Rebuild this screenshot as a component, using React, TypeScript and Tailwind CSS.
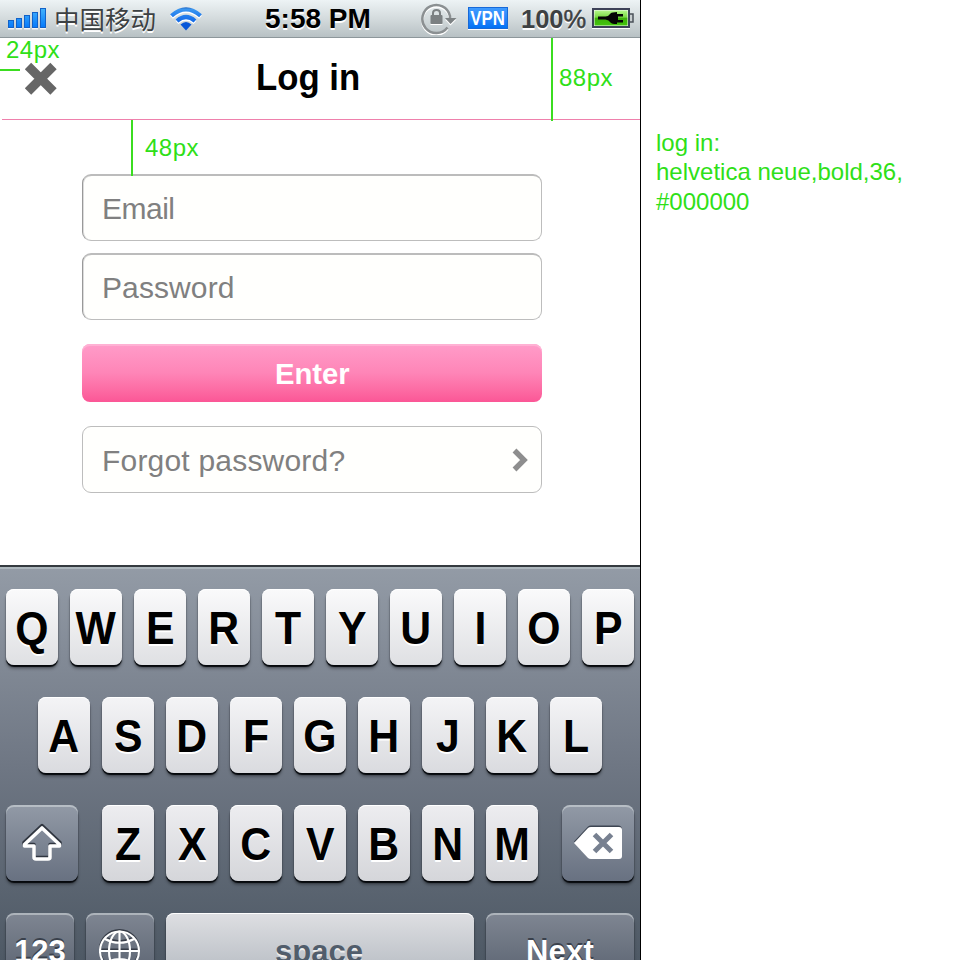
import React from "react";

const KEY =
  "flex h-[76px] items-center justify-center rounded-[8px] shadow-[0_2px_1px_#05080c,0_4px_3px_rgba(0,0,0,0.3),inset_0_1px_0_#fff]";
const DARK =
  "flex h-[76px] items-center justify-center rounded-[8px] shadow-[0_2px_1px_#05080c,0_4px_3px_rgba(0,0,0,0.3),inset_0_2px_0_rgba(220,225,228,0.5)]";

function LetterKey({ letter, tone }: { letter: string; tone: string }) {
  return (
    <div className={`${KEY} w-[52px] bg-linear-to-b ${tone}`}>
      <span className="block scale-x-[0.93] pt-[2px] text-[46px] leading-[74px] font-bold [text-shadow:0_2px_0_#fff]">{letter}</span>
    </div>
  );
}

function SignalBars() {
  const bars = [
    [0, 12, 8],
    [8, 10, 10],
    [16, 7, 13],
    [24, 4, 16],
    [32, 0, 20],
  ];
  return (
    <svg width="38" height="22" viewBox="0 0 38 22">
      <defs>
        <linearGradient id="sig" x1="0" y1="0" x2="0" y2="20" gradientUnits="userSpaceOnUse">
          <stop offset="0" stopColor="#45b4fb" />
          <stop offset="1" stopColor="#0478fb" />
        </linearGradient>
      </defs>
      {bars.map(([x, y, h]) => (
        <g key={x}>
          <rect x={x} y={y + 1.5} width="6" height={h} fill="#fff" opacity=".8" />
          <rect x={x} y={y} width="6" height={h} fill="#1262c8" />
          <rect x={x + 1} y={y + 1} width="4" height={h - 2} fill="url(#sig)" />
        </g>
      ))}
    </svg>
  );
}

function Wifi() {
  return (
    <svg width="34" height="26" viewBox="0 0 34 26">
      <defs>
        <linearGradient id="wifi" x1="0" y1="0" x2="0" y2="24" gradientUnits="userSpaceOnUse">
          <stop offset="0" stopColor="#184ea8" />
          <stop offset=".14" stopColor="#3a96f0" />
          <stop offset=".5" stopColor="#1d76ec" />
          <stop offset="1" stopColor="#0757d8" />
        </linearGradient>
      </defs>
      <g transform="translate(0 1.5)" fill="none" stroke="#fff" strokeWidth="4.2">
        <path d="M2.5 9.800Q17-3 31.500 9.800" />
        <path d="M8 15Q17 7 26 15" />
      </g>
      <g fill="none" stroke="url(#wifi)" strokeWidth="4.200">
        <path d="M2.500 9.800Q17-3 31.500 9.800" />
        <path d="M8 15Q17 7 26 15" />
      </g>
      <path d="M11.500 18.500Q17 13.500 22.500 18.500L17 24.500Z" fill="#0757d8" />
    </svg>
  );
}

function RotationLock() {
  return (
    <svg width="36" height="33" viewBox="0 0 36 33" fill="none">
      <path d="M26.500 25.500A14 14 0 1 1 29 14" stroke="#fff" strokeWidth="2.500" transform="translate(0 1.500)" />
      <path d="M26.500 25.500A14 14 0 1 1 29 14V17" stroke="#8b9092" strokeWidth="2.500" />
      <path d="M24 17.500H35.500L29.500 23.500Z" fill="#fff" />
      <path d="M24 16H35.500L29.500 22Z" fill="#7d8284" />
      <rect x="9.500" y="13" width="12" height="9" rx="1" fill="#7b8082" />
      <path d="M12 13V11Q12 8 15.500 8Q19 8 19 11V13" stroke="#7b8082" strokeWidth="2" />
      <path d="M9.500 22.500H21.500" stroke="#fff" />
    </svg>
  );
}

function Battery() {
  return (
    <svg width="42" height="22" viewBox="0 0 42 22">
      <defs>
        <linearGradient id="bat" x1="0" y1="0" x2="0" y2="1">
          <stop offset="0" stopColor="#b4f88a" />
          <stop offset=".45" stopColor="#79d943" />
          <stop offset=".5" stopColor="#3dae0b" />
          <stop offset="1" stopColor="#43c50c" />
        </linearGradient>
      </defs>
      <path d="M0 20.500H38" stroke="#fff" />
      <rect x="1" y="1" width="36" height="18" fill="#f3f7f6" stroke="#3d4258" strokeWidth="2" />
      <rect x="2.500" y="2.500" width="33" height="15" fill="url(#bat)" />
      <path d="M38 6H41V14H38" fill="#c8ced0" stroke="#4b515a" strokeWidth="1.500" />
      <path d="M6 8.500H13.500Q17 8 18.500 5.500Q20 4 25 4V6H31V8.500H26V12H31V14.500H25V16Q20 16 18.500 14.500Q17 12 13.500 11.500H6Z" fill="#050505" />
    </svg>
  );
}

function Globe() {
  return (
    <svg width="42" height="46" viewBox="0 0 42 46" fill="none">
      <g stroke="#363c47" strokeWidth="2.200" transform="translate(0 -1.500)">
        <circle cx="20.500" cy="23" r="19.500" />
        <path d="M1.500 23H40M6 11Q20.500 18.500 35 11" />
      </g>
      <g stroke="#fff" strokeWidth="2.100">
        <circle cx="20.500" cy="23" r="19.500" />
        <ellipse cx="20.500" cy="23" rx="10.500" ry="19.500" />
        <path d="M20.500 3.500V42.500M1 23H40M6 11Q20.500 18.500 35 11M6 35Q20.500 27 35 35" />
      </g>
    </svg>
  );
}

function StatusBar() {
  return (
    <div className="flex h-[38px] w-[640px] border-b border-[#8d979b] bg-linear-to-b from-[#edf3f5] via-[#d4dbdd] to-[#b8c1c4]">
      <div className="ml-[8px] mt-[8px] w-[38px]"><SignalBars /></div>
      <div className="ml-[8px] w-[108px] whitespace-nowrap text-[25.500px] leading-[36px] text-[#3d4143] [font-family:'Noto_Sans_CJK_SC',sans-serif] [text-shadow:0_2px_0_#fff]">中国移动</div>
      <div className="ml-[7px] mt-[6px] w-[34px]"><Wifi /></div>
      <div className="ml-[62px] w-[120px] whitespace-nowrap text-[28px] leading-[38px] font-bold [text-shadow:0_2px_0_#fff]">5:58 PM</div>
      <div className="ml-[36px] mt-[2px] w-[36px]"><RotationLock /></div>
      <div className="ml-[11px] mt-[7px] flex h-[22px] w-[40px] items-center justify-center border border-[#1769d8] bg-linear-to-b from-[#3f9bff] to-[#0072f5] text-[20px] leading-none font-bold text-white shadow-[0_1px_0_#fff]">
        <span className="scale-x-[0.84]">VPN</span>
      </div>
      <div className="ml-[13px] w-[66px] whitespace-nowrap text-[25.500px] leading-[38px] font-bold text-[#3d4143] [text-shadow:0_2px_0_#fff]">
        100<span className="font-normal [-webkit-text-stroke:0.5px_#3d4143]">%</span>
      </div>
      <div className="ml-[5px] mt-[8px] w-[42px]"><Battery /></div>
    </div>
  );
}

function Header() {
  return (
    <div className="relative h-[82px] w-[640px]">
      <svg className="absolute left-[24px] top-[24px]" width="34" height="34" viewBox="0 0 34 34">
        <path d="M4 4L29.500 29.500M29.500 4L4 29.500" stroke="#666" strokeWidth="9" />
      </svg>
      <div className="pl-[256px] pt-[16px] text-[36px] leading-[48px] font-bold text-black">
        <span className="inline-block origin-left scale-x-[0.965]">Log in</span>
      </div>
      <div className="absolute bottom-0 left-[2px] h-px w-[638px] bg-[#ef80ac]" />
      <div className="absolute left-0 top-[31px] h-[2px] w-[20px] bg-[#3bdd20]" />
      <div className="absolute left-[6px] top-[-2px] text-[24px] leading-[28px] tracking-[0.5px] text-[#2fdf18]">24px</div>
      <div className="absolute left-[551px] top-0 h-[83px] w-[2px] bg-[#3bdd20]" />
      <div className="absolute left-[559px] top-[26px] text-[24px] leading-[28px] tracking-[0.5px] text-[#2fdf18]">88px</div>
      <div className="absolute left-[131px] top-[82px] h-[56px] w-[2px] bg-[#3bdd20]" />
      <div className="absolute left-[145px] top-[96px] text-[24px] leading-[28px] tracking-[0.5px] text-[#2fdf18]">48px</div>
    </div>
  );
}

function Field({ label, spacing }: { label: string; spacing: string }) {
  return (
    <div className={`h-[67px] rounded-[9px] border border-t-2 border-[#bdbdbd] border-t-[#bcbcbc] border-l-[#999] bg-[#fffffd] pl-[19px] text-[30px] leading-[65px] text-[#808080] shadow-[inset_1px_0_0_#dcdcdc] ${spacing}`}>
      {label}
    </div>
  );
}

function LoginForm() {
  return (
    <div className="ml-[82px] h-[445px] w-[460px] pt-[54px]">
      <Field label="Email" spacing="tracking-[-0.5px]" />
      <div className="h-[12px]" />
      <Field label="Password" spacing="tracking-[0.1px]" />
      <div className="mt-[24px] h-[58px] rounded-[8px] bg-linear-to-b from-[#ff9cc9] via-[#fe85b7] to-[#fb5696] text-center text-[30px] leading-[59px] font-bold text-white shadow-[inset_0_2px_0_#ffb1d4]">
        <span className="inline-block scale-x-[0.975]">Enter</span>
      </div>
      <div className="mt-[24px] flex h-[67px] items-center justify-between rounded-[9px] border border-[#bdbdbd] bg-[#fffffd] pl-[19px] pr-[13px] text-[30px] text-[#808080]">
        <span className="pt-[2px] leading-[65px] tracking-[0.2px]">Forgot password?</span>
        <svg width="16" height="24" viewBox="0 0 16 24" fill="none">
          <path d="M2.500 2.500L12 12L2.500 21.500" stroke="#8e8e8e" strokeWidth="5.400" />
        </svg>
      </div>
    </div>
  );
}

function Keyboard() {
  return (
    <div className="h-[395px] w-[640px] overflow-hidden border-t-2 border-[#343a3f] bg-linear-to-b from-[#939ba6] via-[#6f7784] to-[#4e5965] shadow-[inset_0_2px_0_#adb7bd]">
      <div className="flex gap-[12px] pl-[6px] pt-[22px]">
        {"QWERTYUIOP".split("").map((c) => <LetterKey key={c} letter={c} tone="from-[#fafafb] to-[#dfe0e3]" />)}
      </div>
      <div className="flex gap-[12px] pl-[38px] pt-[32px]">
        {"ASDFGHJKL".split("").map((c) => <LetterKey key={c} letter={c} tone="from-[#f4f4f6] to-[#dadbdf]" />)}
      </div>
      <div className="flex gap-[12px] pl-[6px] pt-[32px]">
        <div className={`${DARK} mr-[12px] w-[72px] bg-linear-to-b from-[#929aa6] to-[#687181]`}>
          <svg width="42" height="40" viewBox="0 0 42 40" fill="none" strokeLinejoin="round">
            <path d="M21 4L39 21V23H29V34Q29 36 27 36H15Q13 36 13 34V23H3V21Z" stroke="#303640" strokeWidth="3.500" transform="translate(0 -1.500)" />
            <path d="M21 5L38.500 21.500V23H29V34Q29 36 27 36H15Q13 36 13 34V23H3.500V21.500Z" stroke="#fff" strokeWidth="3.600" />
          </svg>
        </div>
        {"ZXCVBNM".split("").map((c) => <LetterKey key={c} letter={c} tone="from-[#ededf0] to-[#d5d6da]" />)}
        <div className={`${DARK} ml-[12px] w-[72px] bg-linear-to-b from-[#929aa6] to-[#687181]`}>
          <svg width="50" height="36" viewBox="0 0 50 36">
            <path d="M1 18L15 3Q16 2 18 2H45Q49 2 49 6V30Q49 34 45 34H18Q16 34 15 33Z" fill="#3d4552" transform="translate(0 -1.500)" />
            <path d="M1 18L15 3Q16 2 18 2H46Q49 2 49 5V31Q49 34 46 34H18Q16 34 15 33Z" fill="#fff" />
            <path d="M21.500 9.500L38.500 26.500M38.500 9.500L21.500 26.500" stroke="#778090" strokeWidth="5" />
          </svg>
        </div>
      </div>
      <div className="flex gap-[12px] pl-[6px] pt-[32px] font-bold">
        <div className={`${DARK} w-[68px] bg-linear-to-b from-[#7f8692] to-[#555e6c] pt-[3px] text-[31px] text-white [text-shadow:0_-2px_0_#3a414c]`}>123</div>
        <div className={`${DARK} w-[68px] bg-linear-to-b from-[#7f8692] to-[#555e6c]`}><Globe /></div>
        <div className={`${KEY} w-[308px] bg-linear-to-b from-[#dedfe2] to-[#aeb4bc] pt-[3px] text-[31px] text-[#515d6b] [text-shadow:0_2px_0_#eee]`}>
          <span className="-ml-[2px]">space</span>
        </div>
        <div className={`${DARK} w-[148px] bg-linear-to-b from-[#7f8692] to-[#555e6c] pt-[3px] text-[31px] tracking-[0.2px] text-white [text-shadow:0_-2px_0_#3a414c]`}>Next</div>
      </div>
    </div>
  );
}

export default function App() {
  return (
    <div className="flex h-[960px] w-[960px] overflow-hidden bg-white [font-family:'Liberation_Sans',Arial,sans-serif]">
      <div className="w-[641px] shrink-0 border-r border-black">
        <StatusBar />
        <Header />
        <LoginForm />
        <Keyboard />
      </div>
      <div className="pl-[15px] pt-[128px] text-[24px] leading-[29.500px] whitespace-nowrap text-[#2fdf18]">
        <div>log in:</div>
        <div className="-mt-px mb-px">helvetica neue,bold,36,</div>
        <div>#000000</div>
      </div>
    </div>
  );
}
